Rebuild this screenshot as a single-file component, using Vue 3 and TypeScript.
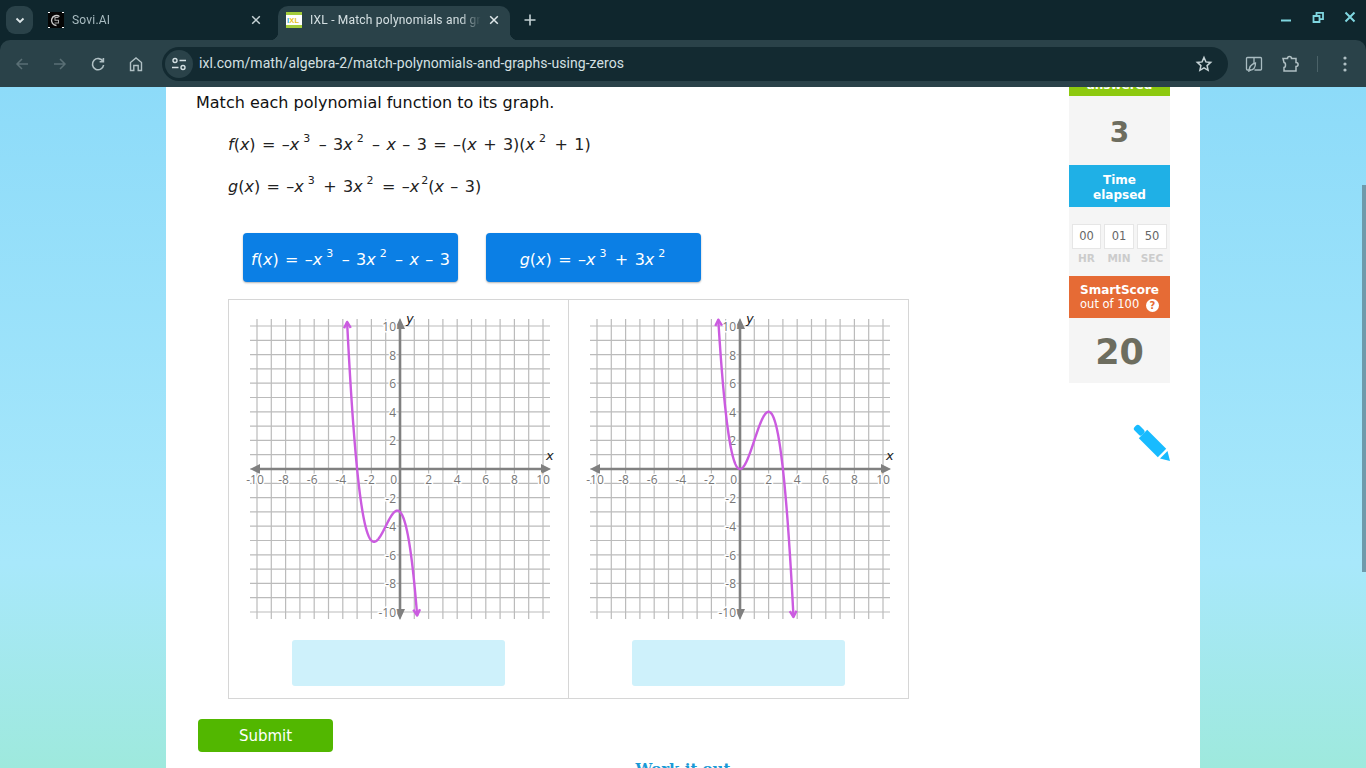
<script setup lang="ts">
const UNIT = 14.3
const OX = 161
const OY = 159

const ticks = Array.from({ length: 21 }, (_, i) => i - 10)
const labels = ticks.filter((n) => n !== 0 && n % 2 === 0)
const timer = [
  { value: '00', label: 'HR' },
  { value: '01', label: 'MIN' },
  { value: '50', label: 'SEC' },
]

function sx(x: number) {
  return OX + x * UNIT
}
function sy(y: number) {
  return OY - y * UNIT
}

function curve(fn: (x: number) => number) {
  const pts: [number, number][] = []
  for (let x = -6; x <= 6; x += 0.02) {
    const y = fn(x)
    if (Math.abs(y) <= 10.45) pts.push([sx(x), sy(y)])
  }
  return pts
}

function head(tip: [number, number], prev: [number, number]) {
  const a = Math.atan2(tip[1] - prev[1], tip[0] - prev[0])
  const l = 7
  const p = (d: number) => `${tip[0] - l * Math.cos(a + d)},${tip[1] - l * Math.sin(a + d)}`
  return `${p(0.5)} ${tip[0]},${tip[1]} ${p(-0.5)}`
}

function graph(fn: (x: number) => number) {
  const pts = curve(fn)
  return {
    line: pts.map((p) => p.join(',')).join(' '),
    start: head(pts[0], pts[4]),
    end: head(pts[pts.length - 1], pts[pts.length - 5]),
  }
}

const graphs = [
  graph((x) => -x * x * x - 3 * x * x - x - 3),
  graph((x) => -x * x * x + 3 * x * x),
]
</script>

<template>
  <div class="window">
    <header class="chrome">
      <div class="tabstrip">
        <button class="tab-search">
          <svg width="12" height="12" viewBox="0 0 12 12"><path d="M2.5 4.5 6 8l3.5-3.5" fill="none" stroke="#dce6e8" stroke-width="1.8" /></svg>
        </button>
        <div class="tab">
          <svg class="favicon" viewBox="0 0 16 16">
            <rect width="16" height="16" fill="#050505" />
            <path d="M0 .5h2M14 .5h2M0 15.500h2M14 15.500h2" stroke="#fff" stroke-width="1" />
            <path d="M11.500 4.500A5 5 0 1 0 8.500 13.500" fill="none" stroke="#ccc" stroke-width="1.4" />
            <path d="M10.500 5.500H7v2.700h3.500v2.800H6.500" fill="none" stroke="#aaa" stroke-width="1.1" />
          </svg>
          <span class="tab-title">Sovi.AI</span>
          <svg class="tab-close" width="10" height="10" viewBox="0 0 10 10"><path d="M1.200 1.200l7.600 7.600M8.800 1.200 1.200 8.800" stroke="#c5d2d5" stroke-width="1.5" /></svg>
        </div>
        <div class="tab active">
          <svg class="favicon" viewBox="0 0 16 16">
            <rect width="16" height="16" fill="#fff" />
            <rect width="16" height="3" fill="#a4cc3b" />
            <rect y="13" width="16" height="3" fill="#a4cc3b" />
            <text x="1" y="11" font-size="7.500" font-weight="700" font-family="'Liberation Sans', sans-serif"><tspan fill="#35a7d8">I</tspan><tspan fill="#e8c020">XL</tspan></text>
          </svg>
          <span class="tab-title">IXL - Match polynomials and graphs using zeros</span>
          <svg class="tab-close" width="10" height="10" viewBox="0 0 10 10"><path d="M1.200 1.200l7.600 7.600M8.800 1.200 1.200 8.800" stroke="#e0e8ea" stroke-width="1.5" /></svg>
        </div>
        <button class="new-tab">
          <svg width="12" height="12" viewBox="0 0 12 12"><path d="M6 .5v11M.5 6h11" stroke="#c5d2d5" stroke-width="1.6" /></svg>
        </button>
        <div class="win-controls">
          <svg width="32" height="20" viewBox="0 0 32 20"><path d="M11 13.500h10" stroke="#7fd6e0" stroke-width="2" /></svg>
          <svg width="32" height="20" viewBox="0 0 32 20"><path d="M14.500 9V5.800H21v6.400h-3.500M11.500 9h6v6h-6z" fill="none" stroke="#7fd6e0" stroke-width="1.800" /></svg>
          <svg width="32" height="20" viewBox="0 0 32 20"><path d="M11.500 5.500l9 9M20.500 5.500l-9 9" stroke="#7fd6e0" stroke-width="2" /></svg>
        </div>
      </div>
      <div class="toolbar">
        <button class="nav">
          <svg width="16" height="16" viewBox="0 0 16 16"><path d="M14 8H3M8 3 3 8l5 5" fill="none" stroke="#5a6f75" stroke-width="1.500" /></svg>
        </button>
        <button class="nav">
          <svg width="16" height="16" viewBox="0 0 16 16"><path d="M2 8h11M8 3l5 5-5 5" fill="none" stroke="#5a6f75" stroke-width="1.500" /></svg>
        </button>
        <button class="nav">
          <svg width="16" height="16" viewBox="0 0 16 16"><path d="M13 5.500A5.600 5.600 0 1 0 13.600 9M13.400 2v3.800H9.600" fill="none" stroke="#b0c0c4" stroke-width="1.600" /></svg>
        </button>
        <button class="nav">
          <svg width="16" height="16" viewBox="0 0 16 16"><path d="M2.500 14.500V6.500L8 2l5.500 4.500v8h-3.300V9.500H5.800v5z" fill="none" stroke="#b0c0c4" stroke-width="1.400" /></svg>
        </button>
        <div class="omnibox">
          <span class="site-info">
            <svg width="16" height="16" viewBox="0 0 16 16" fill="none" stroke="#d5e0e3" stroke-width="1.400">
              <circle cx="4" cy="4.500" r="2" /><path d="M8.500 4.500H15M1 11.500h6.500" /><circle cx="12" cy="11.500" r="2" />
            </svg>
          </span>
          <span class="url">ixl.com/math/algebra-2/match-polynomials-and-graphs-using-zeros</span>
          <svg class="star" width="18" height="18" viewBox="0 0 18 18"><path d="M9 2.500l1.900 4.400 4.800.5-3.600 3.200 1 4.700L9 12.900l-4.100 2.400 1-4.700-3.600-3.200 4.800-.5z" fill="none" stroke="#c5d2d5" stroke-width="1.500" /></svg>
        </div>
        <div class="actions">
          <svg width="18" height="18" viewBox="0 0 18 18" fill="none" stroke="#a9bcc1" stroke-width="1.300">
            <path d="M6 15H2.500a1 1 0 0 1-1-1V3.500a1 1 0 0 1 1-1H9V9M9 2.500h6.500a1 1 0 0 1 1 1V14a1 1 0 0 1-1 1H9.500" />
            <path d="M3.800 17c.2-5 2.700-8 6.700-9 0 4-1.700 7-5.600 7.300" />
          </svg>
          <svg class="puzzle" width="20" height="18" viewBox="0 0 20 18" fill="none" stroke="#b0c0c4" stroke-width="1.500">
            <path d="M2 3.500h4.500C6.500 .8 10.500 .8 10.500 3.500H15v4c2.800 0 2.800 4 0 4v4.500H3v-3.500c2 0 2-5 0-5z" />
          </svg>
          <span class="divider"></span>
          <svg width="4" height="16" viewBox="0 0 4 16" fill="#b0c0c4"><circle cx="2" cy="2" r="1.600" /><circle cx="2" cy="8" r="1.600" /><circle cx="2" cy="14" r="1.600" /></svg>
        </div>
      </div>
    </header>

    <main class="viewport">
      <div class="sheet">
        <section class="practice">
          <p class="prompt">Match each polynomial function to its graph.</p>
          <div class="eq"><i>f</i>(<i>x</i>) = –<i>x</i><sup>3</sup> – 3<i>x</i><sup>2</sup> – <i>x</i> – 3 = –(<i>x</i> + 3)(<i>x</i><sup>2</sup> + 1)</div>
          <div class="eq"><i>g</i>(<i>x</i>) = –<i>x</i><sup>3</sup> + 3<i>x</i><sup>2</sup> = –<i>x</i><sup class="tight">2</sup>(<i>x</i> – 3)</div>
          <div class="tiles">
            <div class="tile"><span><i>f</i>(<i>x</i>) = –<i>x</i><sup>3</sup> – 3<i>x</i><sup>2</sup> – <i>x</i> – 3</span></div>
            <div class="tile"><span><i>g</i>(<i>x</i>) = –<i>x</i><sup>3</sup> + 3<i>x</i><sup>2</sup></span></div>
          </div>
          <div class="board">
            <div v-for="(g, idx) in graphs" :key="idx" class="cell">
              <svg class="plot" width="320" height="320" viewBox="0 0 320 320">
                <line v-for="t in ticks" :key="'v' + t" :x1="sx(t)" :x2="sx(t)" y1="9" y2="309" class="grid" />
                <line v-for="t in ticks" :key="'h' + t" :y1="sy(t)" :y2="sy(t)" x1="11" x2="311" class="grid" />
                <line :x1="17" :x2="305" :y1="OY" :y2="OY" class="axis" />
                <line :x1="OX" :x2="OX" :y1="15" :y2="303" class="axis" />
                <polygon :points="`11,${OY} 21,${OY - 5} 21,${OY + 5}`" class="axis-head" />
                <polygon :points="`312,${OY} 302,${OY - 5} 302,${OY + 5}`" class="axis-head" />
                <polygon :points="`${OX},8 ${OX - 5},19 ${OX + 5},19`" class="axis-head" />
                <polygon :points="`${OX},310 ${OX - 5},299 ${OX + 5},299`" class="axis-head" />
                <text
                  v-for="n in labels"
                  :key="'xl' + n"
                  :x="sx(n) + (n < 0 ? -2 : 0)"
                  :y="OY + 15"
                  text-anchor="middle"
                  class="tick-label"
                >{{ n }}</text>
                <text
                  v-for="n in labels"
                  :key="'yl' + n"
                  :x="OX - 4"
                  :y="sy(n) + 5"
                  text-anchor="end"
                  class="tick-label"
                >{{ n }}</text>
                <text :x="OX - 3" :y="OY + 15" text-anchor="end" class="tick-label">0</text>
                <text :x="OX + 6" y="13" class="axis-name">y</text>
                <text x="307" :y="OY - 9" class="axis-name">x</text>
                <polyline :points="g.line" class="plot-line" />
                <polyline :points="g.start" class="plot-line" />
                <polyline :points="g.end" class="plot-line" />
              </svg>
              <div class="dropzone"></div>
            </div>
          </div>
          <button class="submit">Submit</button>
          <div class="work-it-out">Work it out</div>
        </section>

        <aside class="sidebar">
          <div class="stat-head green">Questions<br />answered</div>
          <div class="stat-value small">3</div>
          <div class="stat-head blue">Time<br />elapsed</div>
          <div class="timer">
            <div v-for="t in timer" :key="t.label" class="timer-part">
              <span class="timer-box">{{ t.value }}</span>
              <span class="timer-label">{{ t.label }}</span>
            </div>
          </div>
          <div class="stat-head orange">
            SmartScore
            <span class="out-of">out of 100 <span class="help">?</span></span>
          </div>
          <div class="stat-value big">20</div>
          <svg class="pencil" width="37" height="37" viewBox="0 0 37 37">
            <rect x="2.700" y="0.700" width="7" height="11" rx="2.500" transform="rotate(-45 6.200 6.200)" fill="#18bbff" />
            <polygon points="14.200,5.800 33.200,24.800 24.800,33.200 5.800,14.200" fill="#18bbff" />
            <polygon points="34.500,27 27,34.500 37,37" fill="#18bbff" />
          </svg>
        </aside>
      </div>
      <div class="scroll-thumb"></div>
    </main>
  </div>
</template>

<style>
html,
body {
  margin: 0;
  overflow: hidden;
}
</style>

<style scoped>
.window {
  width: 1366px;
  height: 768px;
  display: flex;
  flex-direction: column;
  overflow: hidden;
  font-family: "DejaVu Sans", Verdana, sans-serif;
}

button {
  border: none;
  background: none;
  padding: 0;
  display: flex;
  align-items: center;
  justify-content: center;
}

.chrome {
  position: relative;
  z-index: 2;
  background: #0f262d;
  font-family: Roboto, "Liberation Sans", sans-serif;
}

.tabstrip {
  height: 40px;
  display: flex;
  align-items: flex-end;
  padding-left: 6px;
}

.tab-search {
  width: 27px;
  height: 28px;
  margin: 0 7px 6px 0;
  border-radius: 9px;
  background: #2a4249;
}

.tab {
  width: 232px;
  height: 34px;
  margin-right: 6px;
  padding: 0 11px 6px 8px;
  box-sizing: border-box;
  display: flex;
  align-items: center;
  gap: 8px;
  font-size: 12px;
  letter-spacing: 0.2px;
  color: #a9bcc1;
  position: relative;
}

.tab.active {
  background: #2a4249;
  border-radius: 10px 10px 0 0;
  color: #d5e0e3;
}

.tab.active::before,
.tab.active::after {
  content: "";
  position: absolute;
  bottom: 0;
  width: 8px;
  height: 8px;
}

.tab.active::before {
  left: -8px;
  background: radial-gradient(circle at 0 0, transparent 8px, #2a4249 8.500px);
}

.tab.active::after {
  right: -8px;
  background: radial-gradient(circle at 100% 0, transparent 8px, #2a4249 8.500px);
}

.favicon {
  width: 16px;
  height: 16px;
  flex: none;
}

.tab-title {
  flex: 1;
  min-width: 0;
  white-space: nowrap;
  overflow: hidden;
  -webkit-mask-image: linear-gradient(to right, #000 88%, transparent 100%);
  mask-image: linear-gradient(to right, #000 88%, transparent 100%);
}

.tab-close {
  flex: none;
}

.new-tab {
  width: 24px;
  height: 28px;
  margin: 0 0 6px 2px;
}

.win-controls {
  margin-left: auto;
  align-self: flex-start;
  padding-top: 7px;
  display: flex;
}

.toolbar {
  height: 47px;
  box-sizing: border-box;
  background: #2a4249;
  border-radius: 10px 10px 0 0;
  padding-left: 3px;
  display: flex;
  align-items: center;
}

.nav {
  width: 38px;
  height: 34px;
}

.omnibox {
  width: 1066px;
  height: 34px;
  margin: 0 0 0 7px;
  border-radius: 17px;
  background: #132a31;
  display: flex;
  align-items: center;
  padding: 0 15px 0 3px;
  box-sizing: border-box;
}

.site-info {
  width: 28px;
  height: 28px;
  border-radius: 50%;
  background: #2a4249;
  display: flex;
  align-items: center;
  justify-content: center;
}

.url {
  margin: 0 0 2px 6px;
  flex: 1;
  font-size: 14px;
  letter-spacing: 0.065px;
  color: #d5e0e3;
}

.actions {
  flex: 1;
  display: flex;
  align-items: center;
  padding-left: 17px;
}

.puzzle {
  margin-left: 18px;
}

.divider {
  width: 1px;
  height: 16px;
  background: #4b6268;
  margin: 0 25px 0 16px;
}

.viewport {
  position: relative;
  flex: 1;
  min-height: 0;
  overflow: hidden;
  background: linear-gradient(#8ddbf9 0%, #a8e8fb 70%, #9ee9dd 100%);
}

.sheet {
  width: 1034px;
  height: 100%;
  margin-left: 166px;
  background: #fff;
  display: flex;
}

.practice {
  width: 903px;
  box-sizing: border-box;
  padding: 4px 0 0 30px;
  flex: none;
}

.prompt {
  margin: 0;
  font-size: 16px;
  line-height: 24px;
  color: #111;
}

.eq {
  margin: 18px 0 0 32px;
  height: 24px;
  line-height: 24px;
  font-size: 16px;
  word-spacing: 1.300px;
  color: #222;
  white-space: pre;
}

sup {
  font-size: 11px;
  line-height: 0;
  vertical-align: 8.500px;
  margin: 0 2px 0 4px;
}

sup.tight {
  margin: 0 0 0 2px;
}

.tiles {
  display: flex;
  gap: 28px;
  margin: 34px 0 0 47px;
}

.tile {
  width: 215px;
  height: 49px;
  padding-top: 4px;
  box-sizing: border-box;
  background: #0b7fe5;
  border-radius: 4px;
  box-shadow: 0 1px 2px rgba(0, 0, 0, 0.3);
  color: #fff;
  font-size: 16px;
  word-spacing: 1.300px;
  display: flex;
  align-items: center;
  justify-content: center;
  white-space: pre;
}

.board {
  width: 681px;
  box-sizing: border-box;
  margin: 17px 0 0 32px;
  border: 1px solid #d6d6d6;
  display: flex;
}

.cell {
  width: 339px;
  height: 398px;
  box-sizing: border-box;
  padding: 10px 10px 0;
}

.cell + .cell {
  width: 340px;
  border-left: 1px solid #d6d6d6;
}

.plot {
  display: block;
}

.grid {
  stroke: #bbb;
  stroke-width: 1.2;
}

.axis {
  stroke: #808080;
  stroke-width: 2.600;
}

.axis-head {
  fill: #808080;
}

.tick-label {
  font-family: "Open Sans", sans-serif;
  font-size: 12px;
  fill: #777;
  stroke: #fff;
  stroke-width: 3px;
  paint-order: stroke;
}

.axis-name {
  font-family: "DejaVu Sans", sans-serif;
  font-style: italic;
  font-size: 13px;
  fill: #222;
}

.plot-line {
  fill: none;
  stroke: #cb5be0;
  stroke-width: 2.400;
  stroke-linejoin: round;
}

.dropzone {
  width: 213px;
  height: 46px;
  margin: 10px 0 0 53px;
  border-radius: 3px;
  background: #cef1fb;
}

.submit {
  width: 135px;
  height: 33px;
  margin: 20px 0 0 2px;
  border-radius: 4px;
  background: #52b700;
  color: #fff;
  font-family: inherit;
  font-size: 15px;
}

.work-it-out {
  width: 1034px;
  margin: 8px 0 0 -30px;
  text-align: center;
  font-family: "DejaVu Serif", serif;
  font-weight: 700;
  font-size: 15px;
  color: #1a9ad6;
}

.sidebar {
  width: 101px;
  flex: none;
  margin-top: -33px;
  background: #f5f5f5;
  height: 329px;
  position: relative;
}

.stat-head {
  color: #fff;
  font-size: 12px;
  font-weight: 700;
  line-height: 15px;
  text-align: center;
  box-sizing: border-box;
  height: 42px;
  padding-top: 7px;
}

.green {
  background: #8dc90f;
  padding-top: 9px;
}

.blue {
  background: #1fb0e6;
  padding-top: 8px;
}

.orange {
  background: #e66b35;
}

.stat-value {
  text-align: center;
  font-weight: 700;
  color: #6d6d5f;
}

.small {
  height: 69px;
  line-height: 74px;
  font-size: 28px;
}

.big {
  height: 65px;
  line-height: 68px;
  font-size: 35px;
}

.timer {
  height: 69px;
  box-sizing: border-box;
  padding: 17px 0 0 3px;
  display: flex;
  gap: 3px;
}

.timer-part {
  display: flex;
  flex-direction: column;
  align-items: center;
}

.timer-box {
  width: 29px;
  height: 25px;
  box-sizing: border-box;
  background: #fff;
  border: 1px solid #e6e6e6;
  font-size: 11.500px;
  line-height: 23px;
  text-align: center;
  color: #666;
}

.timer-part + .timer-part .timer-box {
  width: 30px;
}

.timer-label {
  margin-top: 3px;
  font-size: 10.500px;
  font-weight: 700;
  color: #ccc;
  line-height: 13px;
}

.out-of {
  display: block;
  line-height: 13px;
  font-size: 11.500px;
  font-weight: 400;
}

.help {
  display: inline-block;
  width: 13px;
  height: 13px;
  margin-left: 3px;
  border-radius: 50%;
  background: #fff;
  color: #e66b35;
  font-size: 10px;
  font-weight: 700;
  line-height: 13px;
  vertical-align: -1px;
}

.pencil {
  position: absolute;
  left: 64px;
  top: 370px;
}

.scroll-thumb {
  position: absolute;
  right: 0;
  top: 98px;
  width: 4px;
  height: 387px;
  background: #6e9aab;
}
</style>
